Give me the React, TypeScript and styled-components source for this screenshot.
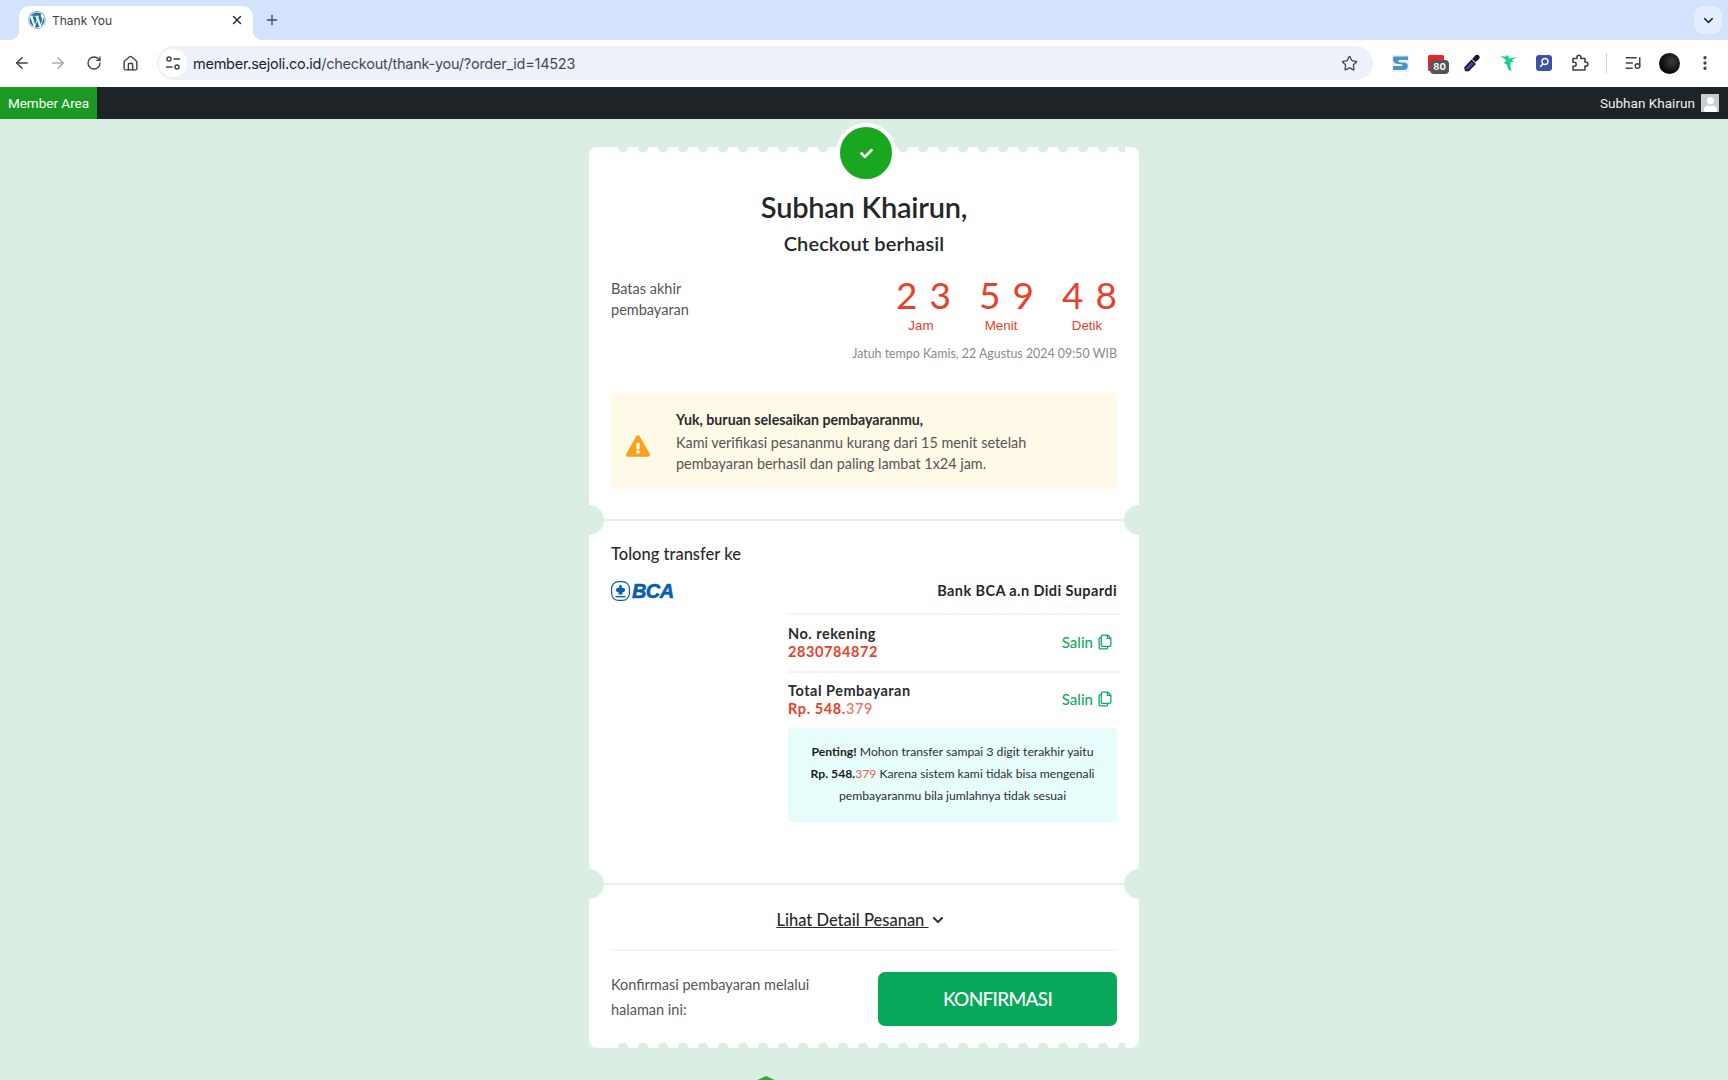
import React from "react";
import styled, { createGlobalStyle } from "styled-components";
import { ArrowLeft, ArrowRight, RotateCw, House, Star, ChevronDown, X, Plus, ListMusic, EllipsisVertical } from "lucide-react";
import { FaWordpress, FaCheck, FaChevronDown, FaExclamationTriangle, FaUser } from "react-icons/fa";

const PAGE = "#daeee3";
const RED = "#e8402a";
const BODY = `"Lato", "Noto Sans", sans-serif`;
const UI = `"Inter", "Liberation Sans", sans-serif`;

const Global = createGlobalStyle`
  html, body { margin: 0; padding: 0; height: 1080px; overflow: hidden; background: ${PAGE}; }
  body { font-family: ${BODY}; color: #222; }
  * { box-sizing: border-box; }
`;

const TabStrip = styled.div`
  height: 40px; background: #d3e3fd; display: flex; align-items: flex-end; padding-left: 19px; position: relative;
`;
const Tab = styled.div`
  width: 234px; height: 34px; background: #fff; border-radius: 10px 10px 0 0; display: flex; align-items: center;
  padding: 0 9px 6px 9px; position: relative; font: 400 12px ${UI}; color: #3c4043;
  &::before, &::after { content: ""; position: absolute; bottom: 0; width: 10px; height: 10px; }
  &::before { left: -10px; background: radial-gradient(circle at 0 0, #d3e3fd 10px, #fff 10.5px); }
  &::after { right: -10px; background: radial-gradient(circle at 100% 0, #d3e3fd 10px, #fff 10.5px); }
`;
const Favicon = styled.span`
  color: #21759b; display: flex; margin-right: 6px; background: #fff; border-radius: 50%;
`;
const TabTitle = styled.span` flex: 1; `;
const NewTab = styled.span` margin-left: 11px; display: flex; color: #44474a; padding-bottom: 12px; `;
const TabSearch = styled.span`
  position: absolute; left: 1694px; top: 6px; width: 28px; height: 28px; background: #e4edfd; border-radius: 9px;
  display: flex; align-items: center; justify-content: center; color: #1f2a44;
`;

const Toolbar = styled.div`
  height: 47px; background: #fff; display: flex; align-items: center; padding: 0 0 1px 4px;
`;
const ToolIcon = styled.span<{ $dim?: boolean }>`
  width: 36px; height: 36px; flex: none; display: flex; align-items: center; justify-content: center;
  color: ${p => (p.$dim ? "#a8abb0" : "#3f4347")}; position: relative;
`;
const Omnibox = styled.div`
  margin: 0 9px; width: 1216px; height: 34px; border-radius: 17px; background: #edf2fa; display: flex; align-items: center;
  padding-left: 2px; font: 400 14.5px ${UI}; color: #444a50; flex: none;
`;
const TuneChip = styled.span`
  width: 28px; height: 28px; border-radius: 50%; background: #fff; display: flex; align-items: center; justify-content: center; margin-right: 6px;
`;
const UrlHost = styled.span` color: #1f2124; `;
const Url = styled.span` flex: 1; letter-spacing: -0.25px; `;
const StarIcon = styled.span` display: flex; margin-right: 15px; color: #3f4347; `;
const Sep = styled.span` width: 1px; height: 20px; background: #c9d7ee; margin: 0 8px 0 8px; flex: none; `;
const Badge80 = styled.span`
  position: absolute; left: 12px; top: 15px; width: 19px; height: 14px; border-radius: 4px; background: #555;
  color: #fff; font: 700 9.5px/14px ${UI}; text-align: center;
`;
const Avatar = styled.span`
  width: 21px; height: 21px; border-radius: 50%; background: radial-gradient(circle at 60% 40%, #3a3f36 0, #0c0c0c 60%);
`;

const AdminBar = styled.div`
  height: 32px; background: #1d2327; display: flex; align-items: center; justify-content: space-between; color: #f0f0f1;
  font: 400 13.5px "Roboto", sans-serif;
`;
const MemberLink = styled.div`
  width: 97px; height: 32px; background: #1a9a25; display: flex; align-items: center; justify-content: center; color: #fff;
`;
const AdminUser = styled.div` display: flex; align-items: center; gap: 6px; padding-right: 9px; letter-spacing: 0.03px; `;
const AdminAvatar = styled.span`
  width: 18px; height: 18px; background: #c9cccc; display: flex; align-items: flex-end; justify-content: center; color: #fff; overflow: hidden;
`;

const Card = styled.main`
  position: relative; width: 550px; margin: 28px auto 0; background: #fff; border-radius: 8px; padding: 42px 22px 22px;
  &::before, &::after { content: ""; position: absolute; left: 24px; right: 14px; height: 6px; background-repeat: repeat-x; background-size: 20px 6px; }
  &::before { top: 0; background-image: radial-gradient(circle at 10px 0, ${PAGE} 5px, transparent 5.6px); }
  &::after { bottom: 0; background-image: radial-gradient(circle at 10px 6px, ${PAGE} 5px, transparent 5.6px); }
`;
const SuccessBadge = styled.span`
  position: absolute; z-index: 1; left: 247px; top: -24px; width: 60px; height: 60px; border-radius: 50%; background: #19a71f; border: 4px solid #fff;
  display: flex; align-items: center; justify-content: center; color: #fff;
`;
const Title = styled.h1`
  margin: 0; text-align: center; font: 600 29px/36px ${BODY}; color: #25282b; letter-spacing: -0.25px;
`;
const SubTitle = styled.h2`
  margin: 4px 0 0; text-align: center; font: 600 20px/28px ${BODY}; color: #25282b; letter-spacing: 0.12px;
`;
const CountdownRow = styled.div` margin-top: 21px; display: flex; justify-content: space-between; align-items: flex-start; `;
const DeadlineLabel = styled.div` font: 400 14.5px/21px ${BODY}; color: #555; width: 100px; `;
const Countdown = styled.div` display: flex; gap: 28px; margin-top: -1px; `;
const Unit = styled.div` width: 55px; text-align: center; `;
const Digits = styled.div`
  display: flex; justify-content: space-between; font: 400 37px/36px ${BODY}; color: ${RED};
`;
const UnitLabel = styled.div<{ $nudge?: number }>`
  margin: 5px ${p => 5 + (p.$nudge ?? 0)}px 0 0; font: 400 13.4px/16px "Liberation Sans", sans-serif; color: ${RED};
`;
const DueDate = styled.div` margin-top: 12px; text-align: right; font: 400 12.4px/16px ${BODY}; color: #8a8a8a; `;
const Alert = styled.div`
  margin-top: 31px; height: 96px; background: #fff9e8; display: flex; align-items: center; padding: 1px 14px 0 15px;
`;
const AlertIcon = styled.span` width: 50px; flex: none; display: flex; color: #f9a11b; padding-top: 8px; `;
const AlertBody = styled.div` font: 400 14.4px/21px ${BODY}; color: #555; `;
const AlertTitle = styled.div` font-weight: 700; color: #2b2b2b; font-size: 14.2px; line-height: 22px; margin-bottom: 1px; `;
const Divider = styled.div`
  position: relative; height: 2px; background: #e8eeec; margin: 30px -22px 0;
  &::before, &::after { content: ""; position: absolute; top: -14px; width: 30px; height: 30px; border-radius: 50%; background: ${PAGE}; }
  &::before { left: -15px; }
  &::after { right: -15px; }
`;
const SectionTitle = styled.h3` margin: 21px 0 0; font: 500 16.5px/24px ${BODY}; color: #2a2a2a; `;
const BankRow = styled.div` margin-top: 14px; height: 22px; display: flex; justify-content: space-between; align-items: center; `;
const BcaLogo = styled.div` display: flex; align-items: center; gap: 2px; `;
const BcaWord = styled.span`
  font: italic 900 20px/20px "Liberation Sans", sans-serif; color: #0a5eae; letter-spacing: -0.6px; -webkit-text-stroke: 0.6px #0a5eae;
`;
const BankName = styled.div` font: 700 14.5px/22px ${BODY}; color: #25282b; letter-spacing: 0.4px; `;
const AccountColumn = styled.div` margin: 11px -3px 0 177px; `;
const AccountRow = styled.div`
  height: 58px; border-top: 2px solid #f2f3f3; display: flex; justify-content: space-between; align-items: flex-start; padding: 10px 8px 0 0;
  & + & { height: 57px; padding-top: 9px; }
`;
const AccountLabel = styled.div` font: 700 14.5px/18px ${BODY}; color: #2b2b2b; letter-spacing: 0.5px; `;
const AccountValue = styled.div` font: 700 14.5px/18px ${BODY}; color: ${RED}; letter-spacing: 0.6px; `;
const LightDigits = styled.span` opacity: 0.75; font-weight: 500; `;
const CopyButton = styled.div`
  display: flex; align-items: center; gap: 5px; height: 18px; margin-top: 8px; font: 500 15px/18px ${BODY}; color: #0fa962;
`;
const InfoBox = styled.div`
  width: 329px; height: 94px; background: #e6fdfc; padding: 13px 10px; text-align: center; font: 400 12.2px/22px ${BODY}; color: #2e2e2e;
`;
const Strong = styled.b` font-weight: 700; color: #1c1c1c; `;
const Coral = styled.span` color: #e8604a; `;
const Spacer = styled.div` height: 31px; `;
const DetailToggle = styled.div`
  margin-top: 23px; height: 24px; display: flex; justify-content: center; align-items: center; gap: 3px; font: 500 16.5px/24px ${BODY}; color: #2a2a2a; padding-right: 8px;
`;
const DetailLink = styled.span` text-decoration: underline; white-space: pre; `;
const Rule = styled.div` height: 2px; background: #f1f3f3; margin-top: 17px; `;
const ConfirmRow = styled.div` margin-top: 21px; display: flex; justify-content: space-between; align-items: flex-start; `;
const ConfirmText = styled.div` width: 220px; font: 400 14.5px/25px ${BODY}; color: #555; `;
const ConfirmButton = styled.button`
  width: 239px; height: 54px; border: 0; border-radius: 7px; background: #07a85a; color: #fff; font: 500 19px ${BODY}; letter-spacing: -0.7px; padding: 0 0 2px;
`;
const FooterMark = styled.div` width: 30px; margin: 28px 0 0 751px; display: flex; `;

const Tune = () => (
  <svg width="16" height="16" viewBox="0 0 16 16" fill="none" stroke="#3f4347" strokeWidth="1.5">
    <circle cx="4" cy="4" r="2" /><path d="M8.5 4H15" /><circle cx="12" cy="12" r="2" /><path d="M1 12h6.5" />
  </svg>
);
const SRibbon = () => (
  <svg width="17" height="17" viewBox="0 0 17 17">
    <rect width="17" height="17" fill="#e9f1f6" />
    <path d="M2 1.5h14v3.5H7.5c-1.5 0-1.5 2 0 2.2l6 .6c3.5.6 3 7.2-1 7.2H1V11h8.5c1.4 0 1.4-1.600 0-1.700l-5-.5C0 8 0.500 1.500 2 1.500z" fill="#4d95c0" />
  </svg>
);
const RedCal = () => (
  <svg width="16" height="16" viewBox="0 0 16 16"><rect width="16" height="16" rx="1.5" fill="#e3272c" /><path d="M3 6h3v2H3zM8 6h3v2H8z" fill="#fff" opacity=".8" /></svg>
);
const Dropper = () => (
  <svg width="17" height="18" viewBox="0 0 17 18">
    <path d="M1.5 16.5l-.5-3 6.5-7 3.5 3.5-6.5 6.5z" fill="#4b3fa8" stroke="#16161c" strokeWidth="1.4" />
    <path d="M8 5l2-2c1-2 3.5-3 5-1.500s.5 3.500-1.500 4.800l-2 2z" fill="#16161c" />
  </svg>
);
const Ninja = () => (
  <svg width="17" height="18" viewBox="0 0 17 18">
    <path d="M0 2l5 .8 1.500-1.800 2 1.500.8 2 7-1.500-4.500 3.500 2.500 1-3.500.8-.5 3 1.200 6-3.500-2-1-4.500-3-1.500 2.300-3z" fill="#12d38f" />
  </svg>
);
const Lens = () => (
  <svg width="16" height="16" viewBox="0 0 16 16">
    <rect width="16" height="16" rx="3" fill="#3c52a3" />
    <circle cx="9" cy="6.500" r="3" fill="none" stroke="#fff" strokeWidth="1.400" /><path d="M7 9l-2.800 2.800" stroke="#fff" strokeWidth="1.600" />
  </svg>
);
const Extensions = () => (
  <svg width="18" height="18" viewBox="0 0 18 18" fill="none" stroke="#3f4347" strokeWidth="1.600" strokeLinejoin="round">
    <path d="M2 4.500h4V3.200a1.900 1.900 0 0 1 3.800 0V4.500h4.200v3.800h1a1.900 1.900 0 0 1 0 3.800h-1V16H2v-3.800h1.200a2 2 0 0 0 0-4H2z" />
  </svg>
);
const CopyIcon = () => (
  <svg width="14" height="16" viewBox="0 0 13 15" fill="none" stroke="#0fa962" strokeWidth="1.200" strokeLinejoin="round">
    <path d="M4 1h5l3 3v6.500a1 1 0 0 1-1 1H4a1 1 0 0 1-1-1V2a1 1 0 0 1 1-1z" /><path d="M8.700 1v3.200H12" /><path d="M3 3.500H2a1 1 0 0 0-1 1V13a1 1 0 0 0 1 1h6a1 1 0 0 0 1-1v-1.500" />
  </svg>
);
const BcaEmblem = () => (
  <svg width="19" height="20" viewBox="0 0 19 20">
    <rect x=".6" y=".6" width="17.800" height="18.800" rx="7" fill="#fff" stroke="#0a5eae" strokeWidth="1.200" />
    <path d="M9.500 3.500c1.500 1 1.800 2.500 1 3.600 1.800-.8 3.500.3 3.500 2 0 2-2 3-3.200 2.200l1.200 2.200H7l1.200-2.200C7 12.100 5 11.100 5 9.100c0-1.700 1.700-2.800 3.500-2-.8-1.100-.5-2.600 1-3.600z" fill="#0a5eae" />
    <rect x="4.500" y="15" width="10" height="1.400" fill="#0a5eae" />
  </svg>
);
const DigitPair = ({ v }: { v: string }) => (
  <Digits>{v.split("").map((d, i) => <span key={i}>{d}</span>)}</Digits>
);

export default function App() {
  return (
    <>
      <Global />
      <TabStrip>
        <Tab>
          <Favicon><FaWordpress size={18} /></Favicon>
          <TabTitle>Thank You</TabTitle>
          <X size={14} color="#2b2d30" strokeWidth={2.4} />
        </Tab>
        <NewTab><Plus size={16} strokeWidth={2} /></NewTab>
        <TabSearch><ChevronDown size={15} strokeWidth={2.4} /></TabSearch>
      </TabStrip>
      <Toolbar>
        <ToolIcon><ArrowLeft size={18} strokeWidth={2} /></ToolIcon>
        <ToolIcon $dim><ArrowRight size={18} strokeWidth={2} /></ToolIcon>
        <ToolIcon><RotateCw size={16} strokeWidth={2} /></ToolIcon>
        <ToolIcon><House size={17} strokeWidth={2} /></ToolIcon>
        <Omnibox>
          <TuneChip><Tune /></TuneChip>
          <Url><UrlHost>member.sejoli.co.id</UrlHost>/checkout/thank-you/?order_id=14523</Url>
          <StarIcon><Star size={17} strokeWidth={1.8} /></StarIcon>
        </Omnibox>
        <ToolIcon><SRibbon /></ToolIcon>
        <ToolIcon><RedCal /><Badge80>80</Badge80></ToolIcon>
        <ToolIcon><Dropper /></ToolIcon>
        <ToolIcon><Ninja /></ToolIcon>
        <ToolIcon><Lens /></ToolIcon>
        <ToolIcon><Extensions /></ToolIcon>
        <Sep />
        <ToolIcon><ListMusic size={18} strokeWidth={2} /></ToolIcon>
        <ToolIcon><Avatar /></ToolIcon>
        <ToolIcon><EllipsisVertical size={18} strokeWidth={2.4} /></ToolIcon>
      </Toolbar>
      <AdminBar>
        <MemberLink>Member Area</MemberLink>
        <AdminUser>
          Subhan Khairun
          <AdminAvatar><FaUser size={15} /></AdminAvatar>
        </AdminUser>
      </AdminBar>
      <Card>
        <SuccessBadge><FaCheck size={13} /></SuccessBadge>
        <Title>Subhan Khairun,</Title>
        <SubTitle>Checkout berhasil</SubTitle>
        <CountdownRow>
          <DeadlineLabel>Batas akhir pembayaran</DeadlineLabel>
          <Countdown>
            <Unit><DigitPair v="23" /><UnitLabel>Jam</UnitLabel></Unit>
            <Unit><DigitPair v="59" /><UnitLabel $nudge={6}>Menit</UnitLabel></Unit>
            <Unit><DigitPair v="48" /><UnitLabel>Detik</UnitLabel></Unit>
          </Countdown>
        </CountdownRow>
        <DueDate>Jatuh tempo Kamis, 22 Agustus 2024 09:50 WIB</DueDate>
        <Alert>
          <AlertIcon><FaExclamationTriangle size={24} /></AlertIcon>
          <AlertBody>
            <AlertTitle>Yuk, buruan selesaikan pembayaranmu,</AlertTitle>
            Kami verifikasi pesananmu kurang dari 15 menit setelah<br />
            pembayaran berhasil dan paling lambat 1x24 jam.
          </AlertBody>
        </Alert>
        <Divider />
        <SectionTitle>Tolong transfer ke</SectionTitle>
        <BankRow>
          <BcaLogo><BcaEmblem /><BcaWord>BCA</BcaWord></BcaLogo>
          <BankName>Bank BCA a.n Didi Supardi</BankName>
        </BankRow>
        <AccountColumn>
          <AccountRow>
            <div><AccountLabel>No. rekening</AccountLabel><AccountValue>2830784872</AccountValue></div>
            <CopyButton>Salin <CopyIcon /></CopyButton>
          </AccountRow>
          <AccountRow>
            <div><AccountLabel>Total Pembayaran</AccountLabel><AccountValue>Rp. 548.<LightDigits>379</LightDigits></AccountValue></div>
            <CopyButton>Salin <CopyIcon /></CopyButton>
          </AccountRow>
          <InfoBox>
            <Strong>Penting!</Strong> Mohon transfer sampai 3 digit terakhir yaitu<br />
            <Strong>Rp. 548.</Strong><Coral>379</Coral> Karena sistem kami tidak bisa mengenali<br />
            pembayaranmu bila jumlahnya tidak sesuai
          </InfoBox>
        </AccountColumn>
        <Spacer />
        <Divider />
        <DetailToggle><DetailLink>Lihat Detail Pesanan </DetailLink><FaChevronDown size={12} /></DetailToggle>
        <Rule />
        <ConfirmRow>
          <ConfirmText>Konfirmasi pembayaran melalui halaman ini:</ConfirmText>
          <ConfirmButton>KONFIRMASI</ConfirmButton>
        </ConfirmRow>
      </Card>
      <FooterMark>
        <svg width="30" height="20" viewBox="0 0 30 20"><path d="M15 0l13 6v14H2V6z" fill="#39a935" /></svg>
      </FooterMark>
    </>
  );
}
